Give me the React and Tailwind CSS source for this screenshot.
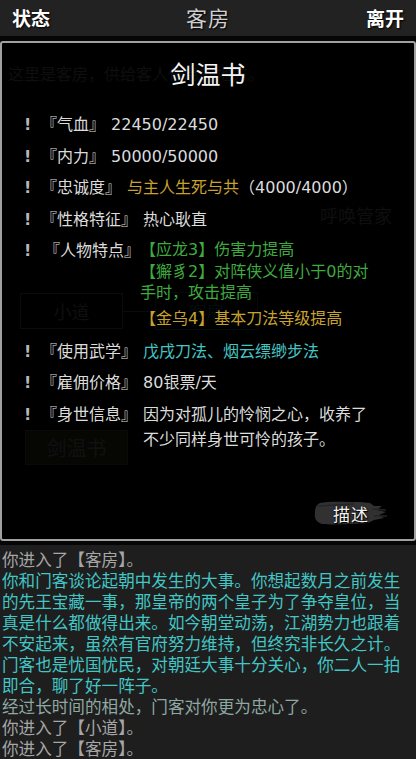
import React from "react";

const FONT = { fontFamily: '"Noto Sans CJK SC", "Noto Sans", sans-serif' };
const SHEET_FONT = { fontFamily: '"DejaVu Sans", "Noto Sans CJK SC", sans-serif' };

function Bang() {
  return <span className="w-[17px] shrink-0 text-[#b8b8b8] font-bold">!</span>;
}

function Row({ label, children, wide }) {
  return (
    <div className="flex items-start leading-[25px]">
      <Bang />
      <span className={wide ? "ml-[3px] shrink-0 text-[#dcdcdc]" : "shrink-0 text-[#dcdcdc]"}>{label}</span>
      <div className={wide ? "flex flex-col whitespace-nowrap" : "ml-[6px] flex flex-col whitespace-nowrap"}>{children}</div>
    </div>
  );
}

function BrushButton({ children }) {
  return (
    <div className="relative w-[74px] h-[26px] flex items-center justify-center">
      <svg className="absolute inset-0" width="74" height="26" viewBox="0 0 74 26">
        <path
          d="M6 3 C14 1 30 2 46 2 L56 3 L60 6 L68 6 L63 10 L72 12 L65 15 L70 18 L60 20 L54 23 C40 24 20 25 8 24 C2 22 0 18 1 12 C1 7 3 4 6 3 Z"
          fill="#313131"
        />
        <path d="M58 9 L72 10 M60 16 L73 16 M4 6 L40 4" stroke="#252525" strokeWidth="1.5" />
      </svg>
      <span className="relative text-[17px] leading-none text-[#f2f2f2] tracking-[1px] [text-shadow:0_0_2px_#000,1px_1px_1px_#000]">
        {children}
      </span>
    </div>
  );
}

export default function App() {
  return (
    <div className="w-[416px] h-[759px] bg-[#1e1e1e] flex flex-col overflow-hidden" style={FONT}>
      {/* top bar */}
      <header className="h-[36px] shrink-0 bg-[#222222] flex items-center justify-between px-[12px]">
        <span className="text-[19px] font-bold text-white [text-shadow:1px_1px_2px_#000]">状态</span>
        <span className="text-[21px] text-[#cfcfcf] tracking-[1px] [text-shadow:1px_1px_2px_#000]">客房</span>
        <span className="text-[19px] font-bold text-white [text-shadow:1px_1px_2px_#000]">离开</span>
      </header>

      {/* room page with the character sheet laid over it */}
      <main className="relative flex-1 bg-[#060606]">
        <div className="flex flex-col px-[8px] text-[#bdbdbd]">
          <p className="mt-[26px] text-[16px] leading-[22px]">这里是客房，供给客人休息的地方。</p>
          <div className="mt-[119px] flex justify-end pr-[16px] text-[18px] leading-[24px]">呼唤管家</div>
          <div className="mt-[65px] flex items-center">
            <div className="ml-[12px] w-[103px] h-[36px] border border-[#9a9a9a] flex items-center justify-center text-[18px]">
              小道
            </div>
            <div className="w-[32px] h-px bg-[#9a9a9a]" />
            <div className="w-[103px] h-[38px] border border-[#3aa0a0] flex items-center justify-center text-[18px] text-[#3aa0a0]">
              客房
            </div>
          </div>
          <div className="mt-[100px] ml-[17px] w-[103px] h-[35px] border border-[#8a8a70] bg-[#5a5530] flex items-center justify-center text-[20px] text-[#e0e0e0]">
            剑温书
          </div>
        </div>

        <div
          className="absolute inset-x-0 top-[5px] bottom-[4px] border-2 border-[#a0a0a0] rounded-[3px] bg-black/[0.93] flex flex-col text-[16px]"
          style={SHEET_FONT}
        >
          <h2 className="pt-[14px] text-center text-[25px] leading-[32px] text-[#f4f4f4]" style={FONT}>
            剑温书
          </h2>
          <div className="mt-[23px] pl-[22px] flex flex-col gap-[6.5px]">
            <Row label="『气血』">
              <span className="text-[#dcdcdc]">22450/22450</span>
            </Row>
            <Row label="『内力』">
              <span className="text-[#dcdcdc]">50000/50000</span>
            </Row>
            <Row label="『忠诚度』">
              <span>
                <span className="text-[#c9a22e]">与主人生死与共</span>
                <span className="text-[#dcdcdc]">（4000/4000）</span>
              </span>
            </Row>
            <Row label="『性格特征』">
              <span className="text-[#dcdcdc]">热心耿直</span>
            </Row>
            <Row label="『人物特点』" wide>
              <span className="text-[#3faa3f] leading-[22px] mt-[1px]">【应龙3】伤害力提高</span>
              <span className="text-[#3faa3f] leading-[21px]">【獬豸2】对阵侠义值小于0的对</span>
              <span className="text-[#3faa3f] leading-[21px]">手时，攻击提高</span>
              <span className="text-[#c9a22e] leading-[25px] mt-[3px] pb-[1px]">【金乌4】基本刀法等级提高</span>
            </Row>
            <Row label="『使用武学』">
              <span className="text-[#45c4c4]">戊戌刀法、烟云缥缈步法</span>
            </Row>
            <Row label="『雇佣价格』">
              <span className="text-[#dcdcdc]">80银票/天</span>
            </Row>
            <Row label="『身世信息』">
              <span className="text-[#dcdcdc]">因为对孤儿的怜悯之心，收养了</span>
              <span className="text-[#dcdcdc]">不少同样身世可怜的孩子。</span>
            </Row>
          </div>
          <div className="mt-auto pb-[13px] pr-[26px] flex justify-end" style={FONT}>
            <BrushButton>描述</BrushButton>
          </div>
        </div>
      </main>

      {/* message log */}
      <section className="h-[214px] shrink-0 pt-[4px] pl-[2px] text-[16.6px] leading-[21px]">
        <div className="w-[404px]">
          <p className="text-[#a6a6a6]">你进入了【客房】。</p>
          <p className="text-[#42c6c6]">
            你和门客谈论起朝中发生的大事。你想起数月之前发生的先王宝藏一事，那皇帝的两个皇子为了争夺皇位，当真是什么都做得出来。如今朝堂动荡，江湖势力也跟着不安起来，虽然有官府努力维持，但终究非长久之计。
          </p>
          <p className="text-[#42c6c6]">门客也是忧国忧民，对朝廷大事十分关心，你二人一拍即合，聊了好一阵子。</p>
          <p className="text-[#8fa8a3]">经过长时间的相处，门客对你更为忠心了。</p>
          <p className="text-[#a6a6a6]">你进入了【小道】。</p>
          <p className="text-[#a6a6a6]">你进入了【客房】。</p>
        </div>
      </section>
    </div>
  );
}
